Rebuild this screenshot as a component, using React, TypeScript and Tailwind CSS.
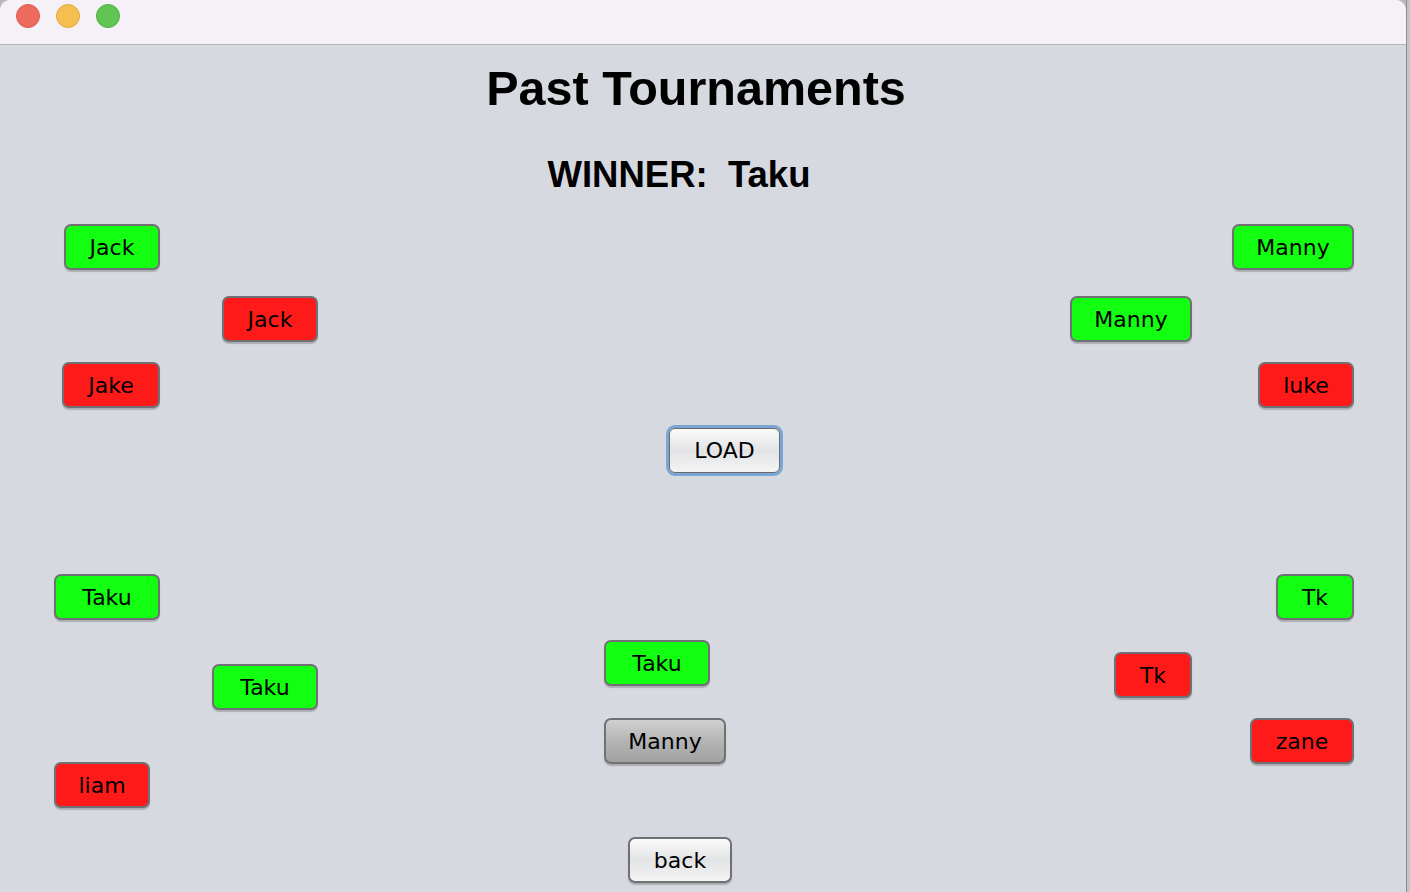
import React from 'react';

type Node = { label: string; x: number; y: number; w: number; tone: 'win' | 'lose' | 'none' };

// bracket nodes, placed where the Swing frame put them (content coords)
const nodes: Node[] = [
  { label: 'Jack', x: 64, y: 179, w: 96, tone: 'win' },
  { label: 'Jack', x: 222, y: 251, w: 96, tone: 'lose' },
  { label: 'Jake', x: 62, y: 317, w: 98, tone: 'lose' },
  { label: 'Manny', x: 1232, y: 179, w: 122, tone: 'win' },
  { label: 'Manny', x: 1070, y: 251, w: 122, tone: 'win' },
  { label: 'luke', x: 1258, y: 317, w: 96, tone: 'lose' },
  { label: 'Taku', x: 54, y: 529, w: 106, tone: 'win' },
  { label: 'Taku', x: 212, y: 619, w: 106, tone: 'win' },
  { label: 'liam', x: 54, y: 717, w: 96, tone: 'lose' },
  { label: 'Tk', x: 1276, y: 529, w: 78, tone: 'win' },
  { label: 'Tk', x: 1114, y: 607, w: 78, tone: 'lose' },
  { label: 'zane', x: 1250, y: 673, w: 104, tone: 'lose' },
  { label: 'Taku', x: 604, y: 595, w: 106, tone: 'win' },
  { label: 'Manny', x: 604, y: 673, w: 122, tone: 'none' },
];

const toneClass = {
  win: 'bg-[#12ff12]',
  lose: 'bg-[#ff1a1a]',
  none: 'bg-gradient-to-b from-[#d0d0d0] via-[#b4b4b4] to-[#a2a2a2]',
};

function NodeButton({ node }: { node: Node }) {
  return (
    <button
      className={`absolute h-[46px] rounded-[7px] border-2 border-[#717175] shadow-[0_1.5px_1px_rgba(0,0,0,0.2)] flex items-center justify-center text-[22px] text-black font-['DejaVu_Sans',sans-serif] ${toneClass[node.tone]}`}
      style={{ left: node.x, top: node.y, width: node.w }}
    >
      {node.label}
    </button>
  );
}

export default function App() {
  return (
    <div className="w-[1410px] h-[892px] flex overflow-hidden bg-[#b9b9bb]">
      <div className="w-[1406px] h-full flex flex-col bg-[#d6d9df] rounded-tl-[10px] rounded-tr-[10px] overflow-hidden">
        {/* Title bar */}
        <div className="h-[45px] shrink-0 bg-[#f5f1f7] border-b border-[#b3b3b7] flex items-start gap-[16px] pl-[16px] pt-[4px]">
          <span className="w-[24px] h-[24px] rounded-full bg-[#ec6a5e] border border-[#d85a4f]" />
          <span className="w-[24px] h-[24px] rounded-full bg-[#f5bf4f] border border-[#dfa83d]" />
          <span className="w-[24px] h-[24px] rounded-full bg-[#61c554] border border-[#52ab45]" />
        </div>

        {/* Content */}
        <div className="relative flex-1 font-['Liberation_Sans',Arial,sans-serif] text-black">
          <h1 className="text-center text-[48.5px] font-bold leading-[48px] pt-[19px] pr-[14px]">Past Tournaments</h1>
          <div className="text-center text-[36.5px] font-bold leading-[40px] mt-[43px] pr-[48px] whitespace-pre">WINNER:  Taku</div>

          {nodes.map((n, i) => (
            <NodeButton key={i} node={n} />
          ))}

          {/* LOAD with focus ring */}
          <div className="absolute left-[666px] top-[380px] rounded-[9px] border-[3px] border-[#7aa6d4]">
            <button className="w-[111px] h-[45px] rounded-[6px] border-[1.5px] border-[#6a6a6e] bg-gradient-to-b from-[#fbfbfb] via-[#e2e3e5] to-[#f4f4f5] flex items-center justify-center text-[22px] font-['DejaVu_Sans',sans-serif]">
              LOAD
            </button>
          </div>

          <button className="absolute left-[628px] top-[792px] w-[104px] h-[46px] rounded-[7px] border-2 border-[#717175] bg-gradient-to-b from-[#fbfbfb] via-[#e2e3e5] to-[#f4f4f5] shadow-[0_1.5px_1px_rgba(0,0,0,0.2)] flex items-center justify-center text-[22px] font-['DejaVu_Sans',sans-serif]">
            back
          </button>
        </div>
      </div>
      <div className="w-[4px] h-full border-l border-[#8e8e90] bg-[#c4c4c6]" />
    </div>
  );
}
